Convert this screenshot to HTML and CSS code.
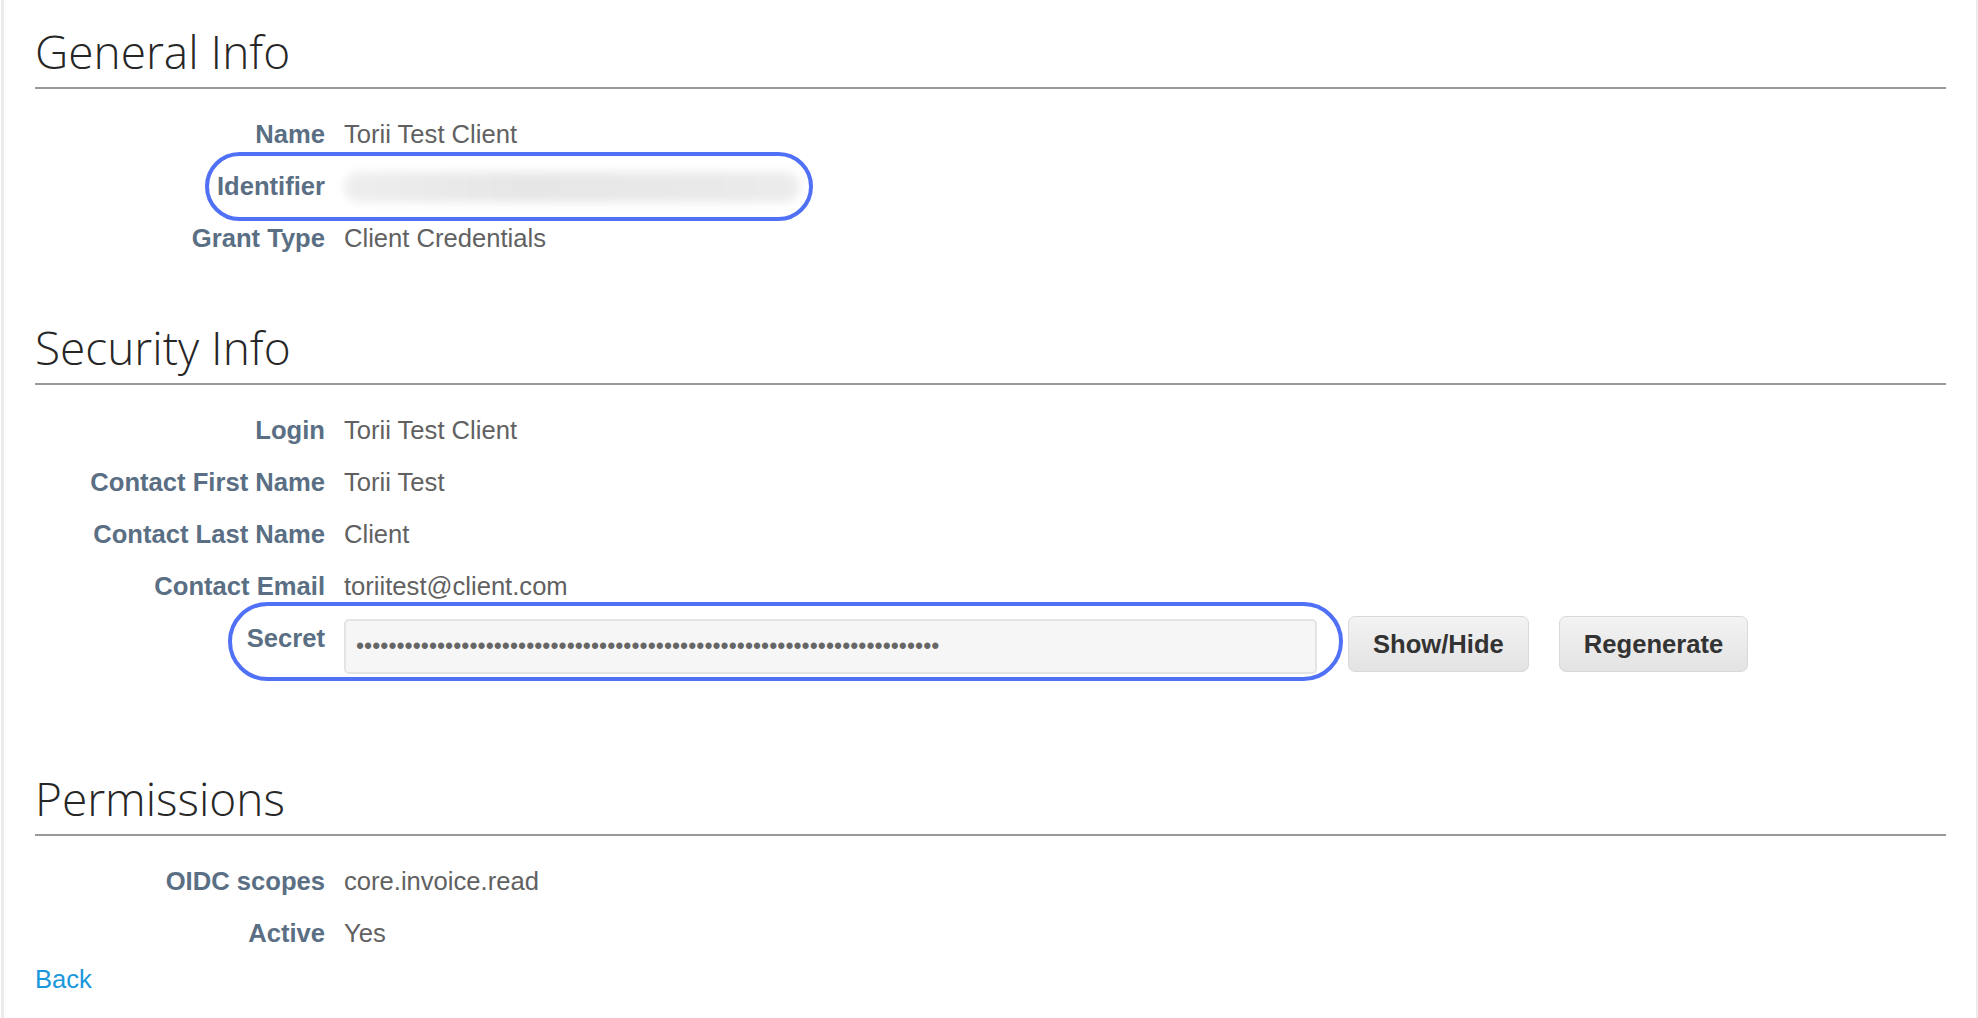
FILE: index.html
```html
<!DOCTYPE html>
<html lang="en">
<head>
<meta charset="utf-8">
<title>Torii Test Client</title>
<link rel="stylesheet" href="styles.css">
</head>
<body>
<div class="page">
  <section class="section section-general">
    <h2 class="section-title">General Info</h2>
    <div class="fields">
      <div class="field"><span class="label">Name</span><span class="value">Torii Test Client</span></div>
      <div class="field"><span class="label">Identifier</span><span class="value"><span class="redacted"></span></span><span class="mark mark-identifier"></span></div>
      <div class="field"><span class="label">Grant Type</span><span class="value">Client Credentials</span></div>
    </div>
  </section>

  <section class="section section-security">
    <h2 class="section-title">Security Info</h2>
    <div class="fields">
      <div class="field"><span class="label">Login</span><span class="value">Torii Test Client</span></div>
      <div class="field"><span class="label">Contact First Name</span><span class="value">Torii Test</span></div>
      <div class="field"><span class="label">Contact Last Name</span><span class="value">Client</span></div>
      <div class="field"><span class="label">Contact Email</span><span class="value">toriitest@client.com</span></div>
      <div class="field field-secret">
        <span class="label">Secret</span>
        <div class="secret-controls">
          <div class="secret-input">••••••••••••••••••••••••••••••••••••••••••••••••••••••••••••••••••••••••</div>
          <button class="btn" type="button">Show/Hide</button>
          <button class="btn" type="button">Regenerate</button>
        </div>
        <span class="mark mark-secret"></span>
      </div>
    </div>
  </section>

  <section class="section section-permissions">
    <h2 class="section-title">Permissions</h2>
    <div class="fields">
      <div class="field"><span class="label">OIDC scopes</span><span class="value">core.invoice.read</span></div>
      <div class="field"><span class="label">Active</span><span class="value">Yes</span></div>
    </div>
  </section>

  <a class="back" href="#">Back</a>
</div>
</body>
</html>
```

FILE: styles.css
```css
html, body {
  margin: 0;
  padding: 0;
  background: #ffffff;
}

body {
  font-family: "Liberation Sans", Arial, sans-serif;
  font-size: 25.6px;
  color: #616161;
}

.page {
  min-height: 1018px;
  box-sizing: border-box;
  margin: 0 0 0 1px;
  border-left: 3px solid #ebebeb;
  border-right: 2px solid #ebebeb;
  padding: 20px 30px 0 31px;
}

.section-security {
  margin-top: 52px;
}

.section-permissions {
  margin-top: 93px;
}

.section-title {
  margin: 0;
  font-family: "Open Sans", "Noto Sans", sans-serif;
  font-weight: 300;
  font-size: 46px;
  line-height: 56px;
  color: #262626;
  padding-top: 3px;
  padding-bottom: 8px;
  border-bottom: 2px solid #999999;
}

.fields {
  padding-top: 19px;
}

.field {
  position: relative;
  display: grid;
  grid-template-columns: 290px 1fr;
  column-gap: 19px;
  line-height: 52px;
}

.label {
  text-align: right;
  font-weight: bold;
  color: #5a6f84;
}

.value {
  color: #616161;
  white-space: nowrap;
}

.redacted {
  display: inline-block;
  vertical-align: middle;
  width: 456px;
  height: 30px;
  margin-top: -2px;
  border-radius: 15px;
  background: linear-gradient(90deg, #eeeeee 0%, #e6e6e6 40%, #e9e9e9 80%, #ececec 100%);
  filter: blur(5px);
}

.secret-controls {
  display: flex;
  align-items: flex-start;
}

.secret-input {
  box-sizing: border-box;
  width: 973px;
  height: 55px;
  margin-top: 7px;
  padding: 0 0 0 10px;
  border: 2px solid #e4e4e4;
  border-radius: 5px;
  background: #f6f6f6;
  color: #666666;
  font-size: 23px;
  letter-spacing: 0.05px;
  line-height: 50px;
  white-space: nowrap;
  overflow: hidden;
}

.btn {
  box-sizing: border-box;
  height: 56px;
  margin-top: 4px;
  margin-left: 31px;
  padding: 0 24px;
  border: 1px solid #d9d9d9;
  border-radius: 7px;
  background: linear-gradient(#f3f3f3, #e3e3e3);
  color: #333333;
  font-family: "Liberation Sans", Arial, sans-serif;
  font-weight: bold;
  font-size: 25.6px;
  line-height: 54px;
}

.btn + .btn {
  margin-left: 30px;
}

.mark {
  position: absolute;
  box-sizing: border-box;
  border: 4px solid #5070f5;
  pointer-events: none;
}

.mark-identifier {
  left: 170px;
  top: -8px;
  width: 608px;
  height: 69px;
  border-radius: 35px;
}

.mark-secret {
  left: 193px;
  top: -10px;
  width: 1115px;
  height: 79px;
  border-radius: 40px;
}

.back {
  display: block;
  width: max-content;
  line-height: 40px;
  color: #1a98dc;
  text-decoration: none;
}
```
